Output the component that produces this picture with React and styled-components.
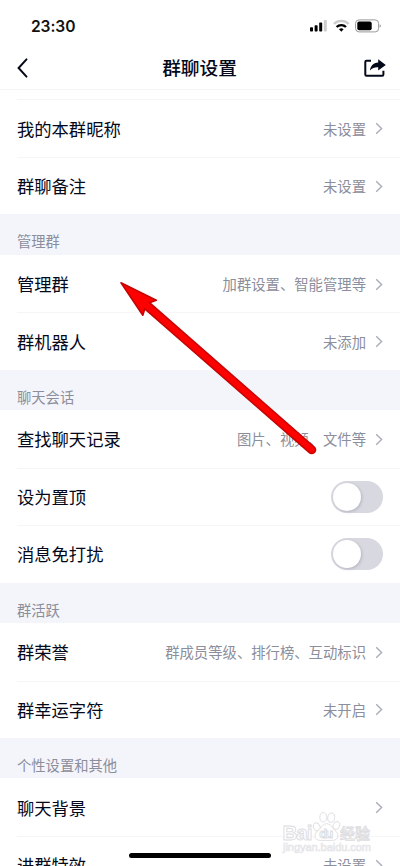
import { useState } from "react";
import styled, { createGlobalStyle } from "styled-components";

const GlobalStyle = createGlobalStyle`
  * {
    box-sizing: border-box;
  }
  body {
    margin: 0;
    background: #fff;
    overflow: hidden;
  }
`;

const Screen = styled.div`
  position: relative;
  width: 400px;
  height: 866px;
  overflow: hidden;
  background: #fff;
  color: #03081a;
  font-family: "Noto Sans CJK SC", sans-serif;
`;

const StatusBar = styled.div`
  display: flex;
  align-items: center;
  justify-content: space-between;
  height: 46px;
  padding: 6px 19px 0 31px;
`;

const Time = styled.span`
  font-family: Inter, sans-serif;
  font-size: 15.6px;
  font-weight: 600;
  letter-spacing: -0.1px;
  color: #111;
`;

const StatusIcons = styled.svg`
  width: 72px;
  height: 16px;
`;

const NavBar = styled.header`
  display: flex;
  align-items: center;
  justify-content: space-between;
  height: 44px;
  padding: 0 14px 0 16px;
  border-bottom: 1px solid #f4f4f6;
`;

const Title = styled.h1`
  margin: 0;
  padding: 0 3px 2px 0;
  font-size: 18.7px;
  line-height: 28px;
  font-weight: 500;
`;

const NavButton = styled.button`
  display: flex;
  width: 22px;
  height: 22px;
  padding: 0;
  border: none;
  background: none;
  color: inherit;
`;

const Content = styled.main`
  padding-top: 9.4px;
`;

const SectionTitle = styled.h2`
  height: 40.4px;
  margin: 0;
  padding: 16px 17px 0;
  background: #f4f5fa;
  color: #8b8e9c;
  font-size: 14.3px;
  line-height: 22px;
  font-weight: 400;
`;

const List = styled.ul`
  margin: 0;
  padding: 0;
`;

const Item = styled.li`
  display: flex;
  align-items: center;
  height: 57.5px;
  margin-left: 17px;
  padding-right: 17px;
  list-style: none;
  border-top: 1px solid ${(props) => (props.$divided ? "#f6f6f8" : "transparent")};
`;

const Label = styled.span`
  flex: 1;
  font-size: 17.3px;
  line-height: 26px;
`;

const Value = styled.span`
  color: #8b8e9c;
  font-size: 14.35px;
  line-height: 22px;
`;

const ChevronIcon = styled.svg`
  width: 8px;
  height: 13px;
  margin-left: 9px;
`;

const Switch = styled.button`
  display: flex;
  align-items: center;
  justify-content: ${(props) => (props.$on ? "flex-end" : "flex-start")};
  width: 52px;
  height: 32px;
  padding: 2px;
  border: none;
  border-radius: 16px;
  background: ${(props) => (props.$on ? "#12b7f5" : "#d7d8e0")};
`;

const Knob = styled.span`
  width: 28px;
  height: 28px;
  border-radius: 50%;
  background: #fff;
  box-shadow: 1px 1px 3px rgba(60, 60, 80, 0.22);
`;

const Arrow = styled.svg`
  position: absolute;
  top: 270px;
  left: 110px;
  pointer-events: none;
`;

const Watermark = styled.svg`
  position: absolute;
  top: 808px;
  left: 278px;
  pointer-events: none;
`;

const HomeIndicator = styled.div`
  position: absolute;
  bottom: 8.5px;
  left: 129px;
  width: 142px;
  height: 5px;
  border-radius: 3px;
  background: #000;
`;

const sections = [
  {
    open: true,
    items: [
      { label: "我的本群昵称", value: "未设置" },
      { label: "群聊备注", value: "未设置" },
    ],
  },
  {
    title: "管理群",
    items: [
      { label: "管理群", value: "加群设置、智能管理等" },
      { label: "群机器人", value: "未添加" },
    ],
  },
  {
    title: "聊天会话",
    items: [
      { label: "查找聊天记录", value: "图片、视频、文件等" },
      { label: "设为置顶", toggle: true },
      { label: "消息免打扰", toggle: true },
    ],
  },
  {
    title: "群活跃",
    items: [
      { label: "群荣誉", value: "群成员等级、排行榜、互动标识" },
      { label: "群幸运字符", value: "未开启" },
    ],
  },
  {
    title: "个性设置和其他",
    items: [
      { label: "聊天背景" },
      { label: "进群特效", value: "未设置" },
    ],
  },
];

const Toggle = ({ label }) => {
  const [on, setOn] = useState(false);

  return (
    <Switch
      role="switch"
      aria-checked={on}
      aria-label={label}
      $on={on}
      onClick={() => setOn(!on)}
    >
      <Knob />
    </Switch>
  );
};

const Chevron = () => (
  <ChevronIcon viewBox="0 0 8 13" fill="none">
    <path d="M1.2 1.2 6.6 6.5 1.2 11.8" stroke="#a9acbb" strokeWidth="1.4" />
  </ChevronIcon>
);

const Row = ({ item, divided }) => (
  <Item $divided={divided}>
    <Label>{item.label}</Label>
    {item.toggle ? (
      <Toggle label={item.label} />
    ) : (
      <>
        {item.value && <Value>{item.value}</Value>}
        <Chevron />
      </>
    )}
  </Item>
);

const App = () => {
  return (
    <Screen>
      <GlobalStyle />
      <StatusBar>
        <Time>23:30</Time>
        <StatusIcons viewBox="0 0 72 16">
          <rect x="1" y="9.3" width="3" height="4.2" rx="0.8" />
          <rect x="5.6" y="7.3" width="3" height="6.2" rx="0.8" />
          <rect x="10.2" y="4.6" width="3" height="8.9" rx="0.8" />
          <rect x="14.8" y="2" width="3" height="11.5" rx="0.8" fill="#ccc" />
          <g fill="none" strokeWidth="2.3">
            <path d="M24.9 5.9a10.4 10.4 0 0 1 14.8 0" stroke="#ccc" />
            <path d="M27.6 9a6.6 6.6 0 0 1 9.4 0" stroke="#000" />
          </g>
          <path d="m32.3 13.7-2.3-2.5a3.4 3.4 0 0 1 4.6 0z" />
          <rect x="46.6" y="1.9" width="23" height="12" rx="3.4" fill="none" stroke="#999" />
          <rect x="48.3" y="3.6" width="14.4" height="8.6" rx="1.8" />
          <path d="M70.6 6.2q1.3.5 1.3 1.7t-1.3 1.7z" fill="#999" />
        </StatusIcons>
      </StatusBar>
      <NavBar>
        <NavButton aria-label="返回">
          <svg width="22" height="22" fill="none" stroke="currentColor" strokeWidth="2">
            <path d="M10.5 2.4 2.6 11l7.9 8.6" strokeLinecap="round" />
          </svg>
        </NavButton>
        <Title>群聊设置</Title>
        <NavButton aria-label="分享">
          <svg width="22" height="22">
            <path
              d="M7 3.8H2.4Q1.3 3.8 1.3 5v12.6q0 1.2 1.2 1.2h15.8q1.1 0 1.1-1.2v-3.8"
              fill="none"
              stroke="currentColor"
              strokeWidth="2"
            />
            <path
              d="M14.2 2.3 21.8 7.9 14.2 13.4V10.2C10.7 10 8.3 10.9 6 13.6 6.4 9 9.2 5.7 14.2 5.4z"
              fill="currentColor"
            />
          </svg>
        </NavButton>
      </NavBar>
      <Content>
        {sections.map((section, index) => (
          <section key={index}>
            {section.title && <SectionTitle>{section.title}</SectionTitle>}
            <List>
              {section.items.map((item, i) => (
                <Row key={item.label} item={item} divided={section.open || i > 0} />
              ))}
            </List>
          </section>
        ))}
      </Content>
      <HomeIndicator />
      <Watermark width="100" height="50">
        <g fill="#fff" fillOpacity="0.75" stroke="#dcdce0" strokeWidth="0.9">
          <ellipse cx="38.8" cy="19" rx="3.3" ry="4.3" transform="rotate(-20 38.8 19)" />
          <ellipse cx="45.3" cy="9.3" rx="3.5" ry="4.8" />
          <ellipse cx="53.2" cy="9.7" rx="3.5" ry="4.8" transform="rotate(10 53.2 9.7)" />
          <ellipse cx="58.4" cy="17.5" rx="3.2" ry="4.1" transform="rotate(20 58.4 17.5)" />
          <path d="M49 15.7c3.4 0 4.7 3 6.7 5.3 2.1 2.3 4.2 4 4.2 6.8 0 3.1-2.4 4.6-5.2 4.6H42.2c-3 0-5.3-1.7-5.3-4.8 0-2.8 2.4-4.3 4.8-6.7 2.1-2.2 3.6-5.2 7.3-5.2z" />
          <g fontFamily="Liberation Sans, sans-serif" fontWeight="700">
            <text x="4.5" y="31.8" fontSize="20.5" textLength="30">Bai</text>
            <text x="41.3" y="29.8" fontSize="13" textLength="14">du</text>
            <text x="62" y="30.6" fontSize="15" fontWeight="500" fontFamily="Noto Sans CJK SC, sans-serif">经验</text>
          </g>
        </g>
        <text
          x="5"
          y="43.2"
          fontSize="11"
          textLength="88"
          fontFamily="Liberation Sans, sans-serif"
          fill="#fff"
          stroke="#e4e4e8"
          strokeWidth="0.7"
        >
          jingyan.baidu.com
        </text>
      </Watermark>
      <Arrow width="216" height="194">
        <path
          d="M11 12.8 46.3 30.3 39.5 32.7 204.2 177A3.6 3.6 0 0 1 199.4 182.6L34.8 38.8 32.8 45.2z"
          fill="#fe0000"
          stroke="#c60404"
          strokeWidth="1.6"
          strokeLinejoin="round"
        />
      </Arrow>
    </Screen>
  );
};

export default App;
